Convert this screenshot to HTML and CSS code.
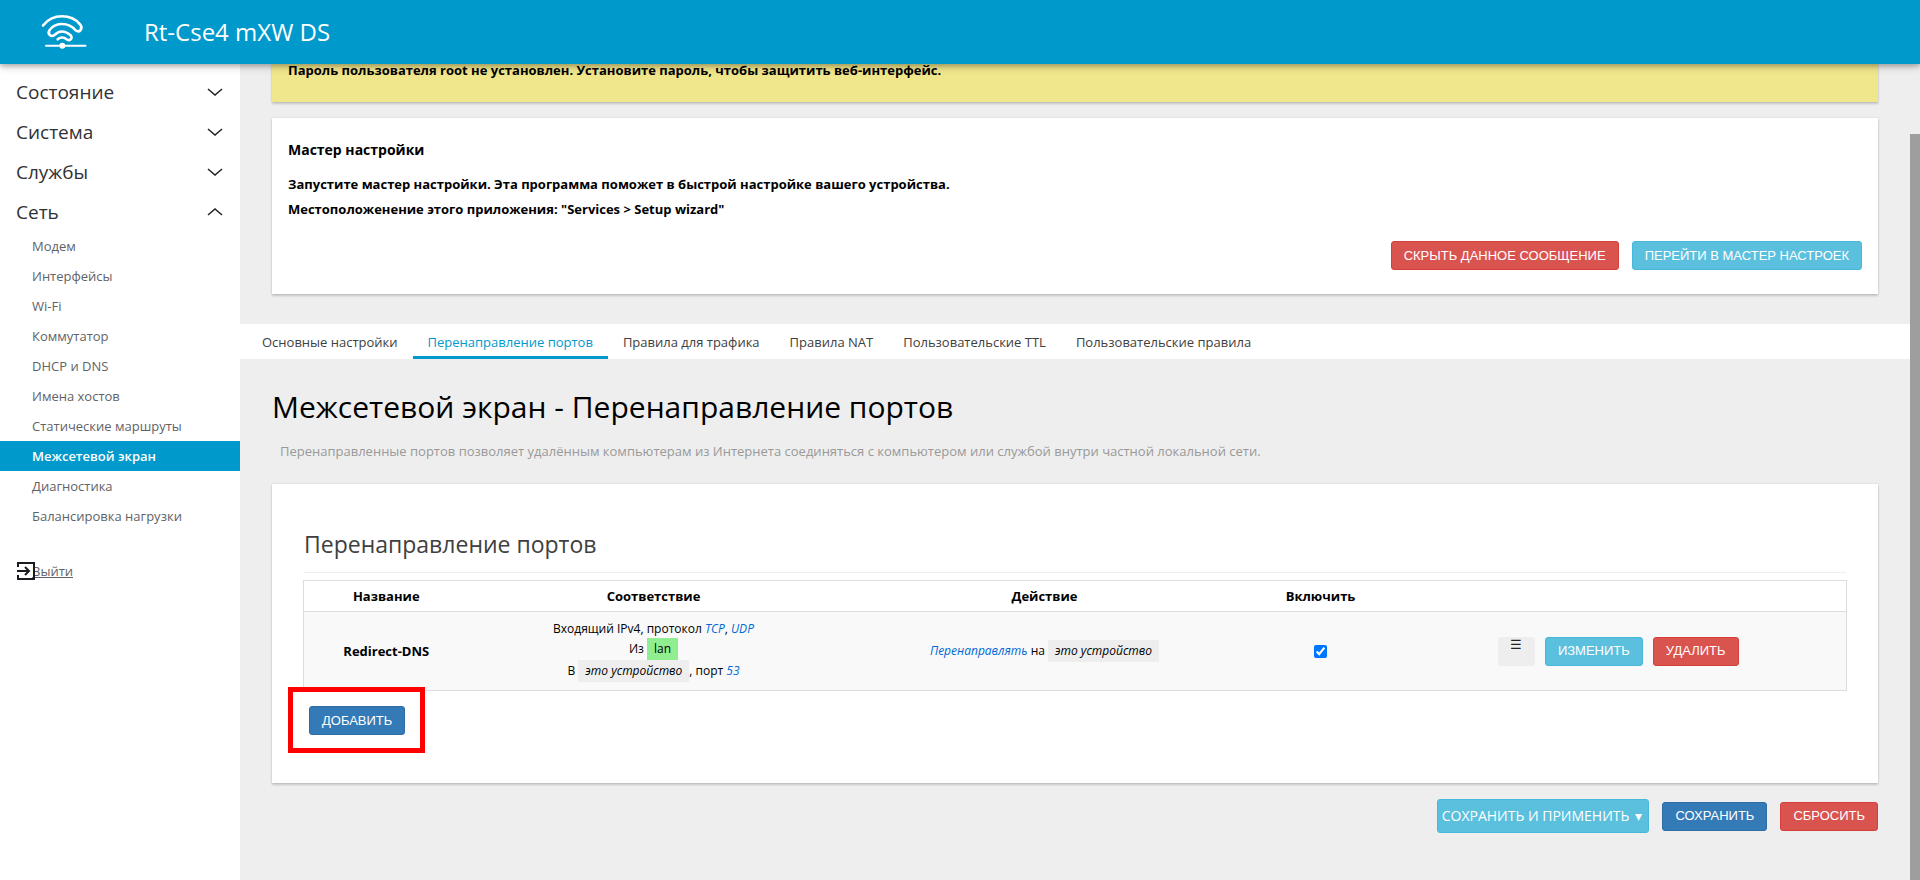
FILE: index.html
```html
<!DOCTYPE html>
<html lang="ru">
<head>
<meta charset="utf-8">
<title>Rt-Cse4 mXW DS - Межсетевой экран</title>
<link rel="stylesheet" href="styles.css">
</head>
<body>
<header class="topbar">
  <svg class="logo" viewBox="0 0 48 40" fill="none" stroke="#fff" stroke-linecap="round" stroke-linejoin="round" aria-hidden="true">
    <path stroke-width="2.6" d="M3 13.500C8 7 14 4.300 22 4.300c8 0 14 3.200 18 8 3.500 4.500-.5 9-4.500 6C32 14 28 12 22 12c-5 0-9 2-12 5.500-3.500 4.500 1 8 4.500 5.500 2.500-2.500 5-3.500 7.500-3.500 3 0 5.500 1.200 8.500 3.600 3 3.200-1 6.300-4 4.200-2.800-2.300-6-2.300-8.800 0"/>
    <path stroke-width="2" d="M6 33.700H45.500"/>
    <circle cx="22.300" cy="33.700" r="3" fill="#fff" stroke="none"/>
  </svg>
  <span class="brand">Rt-Cse4 mXW DS</span>
</header>
<div class="layout">
  <nav class="sidebar">
    <ul class="menu">
      <li><a class="menu-item" href="#">Состояние<svg class="chevron" viewBox="0 0 16 8"><path d="M1 1l7 6 7-6"/></svg></a></li>
      <li><a class="menu-item" href="#">Система<svg class="chevron" viewBox="0 0 16 8"><path d="M1 1l7 6 7-6"/></svg></a></li>
      <li><a class="menu-item" href="#">Службы<svg class="chevron" viewBox="0 0 16 8"><path d="M1 1l7 6 7-6"/></svg></a></li>
      <li><a class="menu-item" href="#">Сеть<svg class="chevron" viewBox="0 0 16 8"><path d="M1 7l7-6 7 6"/></svg></a>
        <ul class="submenu">
          <li><a href="#">Модем</a></li>
          <li><a href="#">Интерфейсы</a></li>
          <li><a href="#">Wi-Fi</a></li>
          <li><a href="#">Коммутатор</a></li>
          <li><a href="#">DHCP и DNS</a></li>
          <li><a href="#">Имена хостов</a></li>
          <li><a href="#">Статические маршруты</a></li>
          <li><a class="active" href="#">Межсетевой экран</a></li>
          <li><a href="#">Диагностика</a></li>
          <li><a href="#">Балансировка нагрузки</a></li>
        </ul>
      </li>
    </ul>
    <a class="logout" href="#">Выйти<svg class="logout-icon" viewBox="0 0 18 18" fill="none" stroke="#1b1b22" stroke-width="2"><path d="M1 5V1H17V17H1V13M0 9H12M8 5l4 4-4 4"/></svg></a>
  </nav>
  <main class="content">
    <section class="alert">Пароль пользователя root не установлен. Установите пароль, чтобы защитить веб-интерфейс.</section>
    <section class="card wizard">
      <h4>Мастер настройки</h4>
      <p>Запустите мастер настройки. Эта программа поможет в быстрой настройке вашего устройства.</p>
      <p>Местоположенение этого приложения: "Services &gt; Setup wizard"</p>
      <div class="wizard-actions">
        <button class="btn red" type="button">СКРЫТЬ ДАННОЕ СООБЩЕНИЕ</button>
        <button class="btn cyan" type="button">ПЕРЕЙТИ В МАСТЕР НАСТРОЕК</button>
      </div>
    </section>
    <nav class="tabs">
      <a href="#">Основные настройки</a>
      <a class="active" href="#">Перенаправление портов</a>
      <a href="#">Правила для трафика</a>
      <a href="#">Правила NAT</a>
      <a href="#">Пользовательские TTL</a>
      <a href="#">Пользовательские правила</a>
    </nav>
    <h2 class="page-title">Межсетевой экран - Перенаправление портов</h2>
    <p class="page-descr">Перенаправленные портов позволяет удалённым компьютерам из Интернета соединяться с компьютером или службой внутри частной локальной сети.</p>
    <section class="card forwards">
      <h3>Перенаправление портов</h3>
      <table class="rules">
        <colgroup><col class="c-name"><col class="c-match"><col class="c-action"><col class="c-enable"><col></colgroup>
        <thead>
          <tr><th>Название</th><th>Соответствие</th><th>Действие</th><th id="enable">Включить</th><th></th></tr>
        </thead>
        <tbody>
          <tr>
            <td class="name">Redirect-DNS</td>
            <td>
              <div class="match">Входящий IPv4, протокол <var>TCP</var>, <var>UDP</var></div>
              <div class="match">Из <span class="zone lan">lan</span></div>
              <div class="match">В <span class="zone"><em>это устройство</em></span>, порт <var>53</var></div>
            </td>
            <td><var>Перенаправлять</var> на <span class="zone"><em>это устройство</em></span></td>
            <td><input type="checkbox" checked aria-labelledby="enable"></td>
            <td>
              <div class="row-actions">
                <button class="btn drag" type="button" title="Переместить">☰</button>
                <button class="btn cyan" type="button">ИЗМЕНИТЬ</button>
                <button class="btn red" type="button">УДАЛИТЬ</button>
              </div>
            </td>
          </tr>
        </tbody>
      </table>
      <div class="add-row">
        <button class="btn blue" type="button">ДОБАВИТЬ</button>
        <span class="highlight"></span>
      </div>
    </section>
    <div class="page-actions">
      <button class="btn cyan split" type="button">СОХРАНИТЬ И ПРИМЕНИТЬ<span class="caret">▾</span></button>
      <button class="btn blue" type="button">СОХРАНИТЬ</button>
      <button class="btn red" type="button">СБРОСИТЬ</button>
    </div>
  </main>
  <div class="scrollbar"><div class="thumb"></div></div>
</div>
</body>
</html>
```
FILE: styles.css
```css
* { box-sizing: border-box; }
body {
  margin: 0;
  min-height: 100vh;
  display: flex;
  flex-direction: column;
  background: #eee;
  color: #000;
  font: 14px/20px "Open Sans", "Noto Sans", sans-serif;
}
a { color: inherit; text-decoration: none; }
ul { list-style: none; margin: 0; padding: 0; }
h2, h3, h4, p { margin: 0; }

.topbar {
  position: relative;
  z-index: 2;
  flex: none;
  height: 64px;
  padding-left: 40px;
  display: flex;
  align-items: center;
  gap: 56px;
  background: #09c;
  color: #fff;
  box-shadow: 0 2px 5px rgba(0, 0, 0, .26), 0 2px 10px rgba(0, 0, 0, .16);
}
.logo { width: 48px; height: 40px; }
.brand { font-size: 24px; line-height: 32px; }

.layout { flex: 1; display: flex; }

.sidebar {
  flex: none;
  width: 240px;
  padding-top: 8px;
  background: #fff;
}
.menu-item {
  display: flex;
  align-items: center;
  justify-content: space-between;
  height: 40px;
  padding: 0 17px 0 16px;
  color: #303134;
  font-size: 19px;
}
.chevron { width: 16px; height: 8px; fill: none; stroke: #202124; stroke-width: 1.5; }
.submenu { margin-top: -1px; }
.submenu a {
  display: block;
  padding-left: 32px;
  line-height: 30px;
  font-size: 13px;
  color: #5f6368;
}
.submenu .active { background: #09c; color: #fff; font-weight: 600; }
.logout {
  position: relative;
  display: block;
  margin-top: 30px;
  padding-left: 32px;
  font-size: 13px;
  color: #5f6368;
  text-decoration: underline;
}
.logout-icon { position: absolute; left: 17px; top: 1px; width: 18px; height: 18px; }

.content { flex: 1; min-width: 0; }

.alert, .card { box-shadow: 0 2px 2px rgba(0, 0, 0, .16), 0 0 2px rgba(0, 0, 0, .12); }
.alert {
  margin: 0 32px 16px;
  padding: 0 16px 26px;
  line-height: 12px;
  font-weight: 700;
  font-size: 13px;
  background: #f0e68c;
}
.card { margin: 0 32px; background: #fff; }
.wizard { padding: 22px 16px 24px; font-weight: 700; font-size: 13px; }
.wizard h4 { font-size: 14px; line-height: 20px; margin-bottom: 12px; }
.wizard p { line-height: 25px; }
.wizard-actions { display: flex; justify-content: flex-end; gap: 13px; margin-top: 19px; }

.btn {
  height: 29px;
  padding: 0 12px;
  border: 1px solid;
  border-radius: 3px;
  color: #fff;
  font: 13px/20px "Liberation Sans", Arial, sans-serif;
}
.red { background: #d9534f; border-color: #d43f3a; }
.cyan { background: #5bc0de; border-color: #46b8da; }
.blue { background: #337ab7; border-color: #2e6da4; }

.tabs {
  display: flex;
  margin-top: 30px;
  padding-left: 7px;
  background: #fff;
  color: #404040;
  font-size: 13px;
}
.tabs a { padding: 8px 15px 4px; border-bottom: 3px solid transparent; }
.tabs .active { color: #09c; border-color: #09c; }

.page-title {
  margin: 26px 32px 0;
  font-size: 30px;
  line-height: 44px;
  font-weight: 400;
}
.page-descr { margin: 12px 40px 23px; color: #999; font-size: 13px; }

.forwards { padding: 44px 31px 48px; }
.forwards h3 {
  margin: 0 1px 7px;
  padding-bottom: 11px;
  border-bottom: 1px solid #eee;
  color: #404040;
  font-size: 23px;
  line-height: 33px;
  font-weight: 400;
}
.rules {
  width: 100%;
  table-layout: fixed;
  border-collapse: collapse;
  border: 1px solid #ddd;
  text-align: center;
  font-size: 12px;
}
.rules th { height: 31px; padding: 0; font-size: 13px; font-weight: 700; }
.rules td { height: 79px; padding: 0; border-top: 1px solid #ddd; background: #f9f9f9; }
.rules .name { font-size: 13px; font-weight: 700; }
.rules var { color: #0069d6; }
.rules input { width: 13px; height: 13px; margin: 0; vertical-align: middle; }
.c-name { width: 165px; }
.c-match { width: 370px; }
.c-action { width: 412px; }
.c-enable { width: 140px; }
.match { line-height: 18px; }
.zone { display: inline-block; padding: 2px 7px; line-height: 18px; background: #eee; }
.zone.lan { background: #90ee90; }
.row-actions { display: flex; justify-content: center; gap: 10px; }
.drag { width: 37px; padding: 0 0 14px; background: #eee; border-color: #eee; color: #222; line-height: 13px; }

.add-row { position: relative; display: flex; margin-top: 15px; padding-left: 6px; }
.highlight {
  position: absolute;
  left: -15px;
  top: -19px;
  width: 137px;
  height: 66px;
  border: 5px solid #f00;
}

.page-actions {
  display: flex;
  justify-content: flex-end;
  align-items: center;
  gap: 13px;
  margin: 16px 32px;
}
.split {
  display: flex;
  align-items: center;
  justify-content: space-between;
  gap: 6px;
  height: 34px;
  padding: 0 6px 0 4px;
  font: 14px/20px "Open Sans", "Noto Sans", sans-serif;
}

.scrollbar { flex: none; width: 10px; padding-top: 70px; display: flex; }
.thumb { flex: 1; background: #9e9e9e; }
```
